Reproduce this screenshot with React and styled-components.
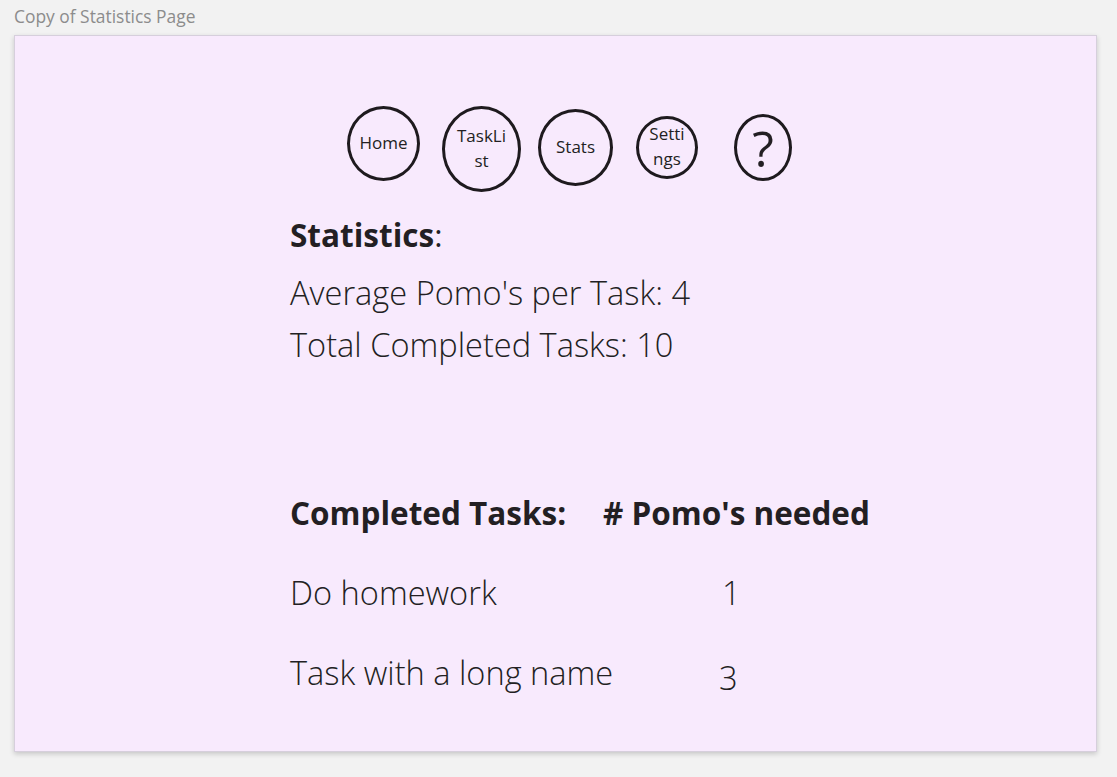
import React from 'react';
import styled, { createGlobalStyle } from 'styled-components';

const GlobalStyle = createGlobalStyle`
  html, body {
    margin: 0;
    padding: 0;
    background: #f2f2f2;
    font-family: "Open Sans", "Liberation Sans", sans-serif;
  }
`;

const navItems = [
  { label: 'Home', w: 73, h: 75, top: 0, gap: 0, textW: 60 },
  { label: 'TaskList', w: 79, h: 86, top: 0, gap: 22, textW: 54 },
  { label: 'Stats', w: 75, h: 77, top: 3, gap: 17, textW: 60 },
  { label: 'Settings', w: 62, h: 63, top: 10, gap: 23, textW: 44 },
];

const tasks = [
  { name: 'Do homework', pomos: 1, offset: 119, drop: 0 },
  { name: 'Task with a long name', pomos: 3, offset: 116, drop: 5 },
];

export default function App() {
  return (
    <Page>
      <GlobalStyle />
      <Caption>Copy of Statistics Page</Caption>
      <Frame>
        <Content>
          <Nav>
            {navItems.map((item) => (
              <NavCircle key={item.label} $w={item.w} $h={item.h} $top={item.top} $gap={item.gap}>
                <NavLabel $w={item.textW}>{item.label}</NavLabel>
              </NavCircle>
            ))}
            <HelpCircle>?</HelpCircle>
          </Nav>

          <Heading>
            <strong>Statistics</strong>:
          </Heading>
          <StatLine $space={18}>Average Pomo's per Task: 4</StatLine>
          <StatLine $space={12}>Total Completed Tasks: 10</StatLine>

          <Table>
            <HeadCell>Completed Tasks:</HeadCell>
            <HeadCell># Pomo's needed</HeadCell>
            {tasks.map((t) => (
              <React.Fragment key={t.name}>
                <TaskName>{t.name}</TaskName>
                <TaskCount $offset={t.offset} $drop={t.drop}>{t.pomos}</TaskCount>
              </React.Fragment>
            ))}
          </Table>
        </Content>
      </Frame>
    </Page>
  );
}

const Page = styled.div`
  width: 1117px;
  height: 777px;
  padding: 4px 0 0 14px;
  box-sizing: border-box;
`;

const Caption = styled.div`
  font-size: 17.4px;
  line-height: 24px;
  color: #8c8c8c;
  height: 31px;
`;

const Frame = styled.div`
  width: 1083px;
  height: 717px;
  box-sizing: border-box;
  background: #f8eafd;
  border: 1px solid #d6cfdc;
  box-shadow: 0 2px 5px rgba(0, 0, 0, 0.18);
`;

const Content = styled.div`
  padding: 70px 0 0 275px;
  color: #231f23;
`;

const Nav = styled.div`
  display: flex;
  align-items: flex-start;
  margin-left: 57px;
  height: 86px;
`;

const NavCircle = styled.div`
  width: ${(p) => p.$w}px;
  height: ${(p) => p.$h}px;
  margin-top: ${(p) => p.$top}px;
  margin-left: ${(p) => p.$gap}px;
  box-sizing: border-box;
  border: 3px solid #1e1a1e;
  border-radius: 50%;
  display: flex;
  align-items: center;
  justify-content: center;
  flex-shrink: 0;
`;

const NavLabel = styled.span`
  width: ${(p) => p.$w}px;
  padding-bottom: 3px;
  font-size: 17px;
  line-height: 25px;
  text-align: center;
  word-break: break-all;
  color: #231f23;
`;

const HelpCircle = styled.div`
  width: 58px;
  height: 67px;
  margin-top: 8px;
  margin-left: 36px;
  box-sizing: border-box;
  border: 3px solid #1e1a1e;
  border-radius: 50%;
  display: flex;
  align-items: center;
  justify-content: center;
  font-size: 50px;
  font-weight: 400;
  line-height: 1;
  color: #231f23;
`;

const Heading = styled.div`
  margin-top: 23px;
  font-size: 31.5px;
  line-height: 40px;
  strong {
    font-weight: 700;
  }
`;

const StatLine = styled.div`
  margin-top: ${(p) => p.$space}px;
  font-size: 32.6px;
  line-height: 40px;
  font-weight: 300;
`;

const Table = styled.div`
  display: grid;
  grid-template-columns: 313px auto;
  row-gap: 40px;
  margin-top: 128px;
`;

const HeadCell = styled.div`
  font-size: 31.5px;
  line-height: 40px;
  font-weight: 700;
  white-space: nowrap;
`;

const TaskName = styled.div`
  font-size: 32.6px;
  line-height: 40px;
  font-weight: 300;
  white-space: nowrap;
`;

const TaskCount = styled.div`
  font-size: 32.6px;
  line-height: 40px;
  font-weight: 300;
  padding-left: ${(p) => p.$offset}px;
  padding-top: ${(p) => p.$drop}px;
`;
